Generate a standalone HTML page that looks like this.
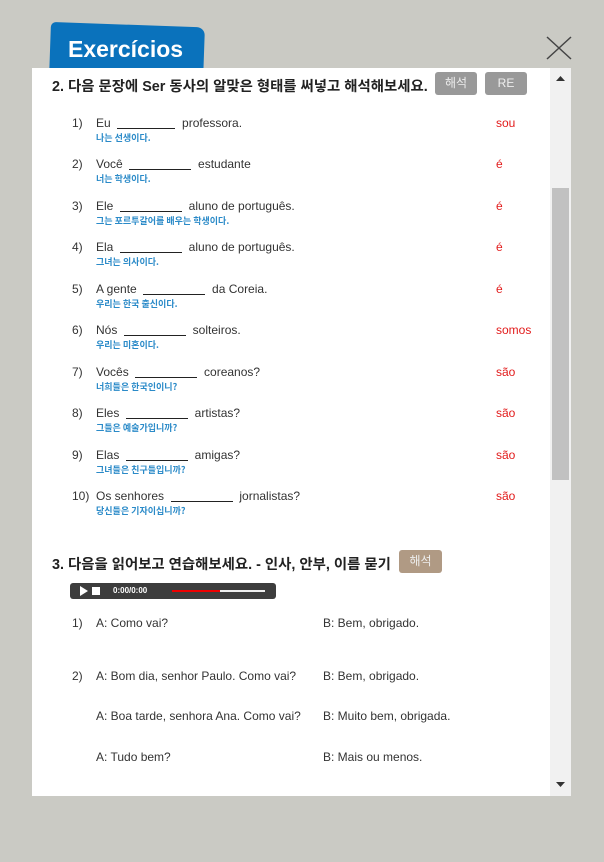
<!DOCTYPE html>
<html><head><meta charset="utf-8"><style>
body{margin:0;width:604px;height:862px;background:#cacac4;position:relative;overflow:hidden;font-family:"Liberation Sans","Noto Sans CJK KR",sans-serif}
.tab{position:absolute;left:51px;top:22px;width:154px;height:56px;background:#0a72bc;border-radius:5px 8px 0 0;transform:rotate(2deg);transform-origin:left top}
.tabt{position:absolute;left:68px;top:36px;color:#fff;font-weight:bold;font-size:23px}
.panel{position:absolute;left:32px;top:68px;width:539px;height:728px;background:#fff}
.sb{position:absolute;left:550px;top:68px;width:21px;height:728px;background:#f1f1f1}
.thumb{position:absolute;left:552px;top:188px;width:17px;height:292px;background:#c1c1c1}
.h{position:absolute;font-size:14.4px;font-weight:bold;color:#222;font-family:"Liberation Sans","Noto Sans CJK KR",sans-serif;white-space:nowrap}
.btn{position:absolute;height:23px;border-radius:3px;color:#eee;font-size:12px;text-align:center;line-height:23px;font-family:"Liberation Sans","Noto Sans CJK KR",sans-serif}
.n{position:absolute;left:72px;font-size:12px;color:#333}
.t{position:absolute;left:96px;font-size:12px;color:#333;white-space:pre}
.k{position:absolute;left:96px;font-size:9px;color:#2a8ac8;font-weight:bold;font-family:"Noto Sans CJK KR",sans-serif}
.a{position:absolute;left:496px;font-size:12px;color:#e21b1b}
.u{display:inline-block;border-bottom:1px solid #222;height:12px;vertical-align:-2px}
.b{position:absolute;left:323px;font-size:12px;color:#333}
</style></head><body>
<div class="tab"></div><div class="tabt">Exercícios</div>
<svg style="position:absolute;left:546px;top:36px" width="26" height="24"><path d="M1 1L25 23M25 1L1 23" stroke="#444" stroke-width="1.5"/></svg>
<div class="panel"></div><div class="sb"></div><div class="thumb"></div>
<svg style="position:absolute;left:555px;top:75px" width="11" height="7"><path d="M1 6L5.5 1L10 6Z" fill="#333"/></svg>
<svg style="position:absolute;left:555px;top:781px" width="11" height="7"><path d="M1 1L5.5 6L10 1Z" fill="#333"/></svg>
<div class="h" style="left:52px;top:75px">2. 다음 문장에 Ser 동사의 알맞은 형태를 써넣고 해석해보세요.</div>
<div class="btn" style="left:435px;top:72px;width:42px;background:#999">해석</div>
<div class="btn" style="left:485px;top:72px;width:42px;background:#999">RE</div>

<div class="n" style="top:116px">1)</div><div class="t" style="top:116px">Eu  <span class="u" style="width:58px"></span>  professora.</div><div class="k" style="top:131px">나는 선생이다.</div><div class="a" style="top:116px">sou</div>
<div class="n" style="top:157px">2)</div><div class="t" style="top:157px">Você  <span class="u" style="width:62px"></span>  estudante</div><div class="k" style="top:172px">너는 학생이다.</div><div class="a" style="top:157px">é</div>
<div class="n" style="top:199px">3)</div><div class="t" style="top:199px">Ele  <span class="u" style="width:62px"></span>  aluno de português.</div><div class="k" style="top:214px">그는 포르투갈어를 배우는 학생이다.</div><div class="a" style="top:199px">é</div>
<div class="n" style="top:240px">4)</div><div class="t" style="top:240px">Ela  <span class="u" style="width:62px"></span>  aluno de português.</div><div class="k" style="top:255px">그녀는 의사이다.</div><div class="a" style="top:240px">é</div>
<div class="n" style="top:282px">5)</div><div class="t" style="top:282px">A gente  <span class="u" style="width:62px"></span>  da Coreia.</div><div class="k" style="top:297px">우리는 한국 출신이다.</div><div class="a" style="top:282px">é</div>
<div class="n" style="top:323px">6)</div><div class="t" style="top:323px">Nós  <span class="u" style="width:62px"></span>  solteiros.</div><div class="k" style="top:338px">우리는 미혼이다.</div><div class="a" style="top:323px">somos</div>
<div class="n" style="top:365px">7)</div><div class="t" style="top:365px">Vocês  <span class="u" style="width:62px"></span>  coreanos?</div><div class="k" style="top:380px">너희들은 한국인이니?</div><div class="a" style="top:365px">são</div>
<div class="n" style="top:406px">8)</div><div class="t" style="top:406px">Eles  <span class="u" style="width:62px"></span>  artistas?</div><div class="k" style="top:421px">그들은 예술가입니까?</div><div class="a" style="top:406px">são</div>
<div class="n" style="top:448px">9)</div><div class="t" style="top:448px">Elas  <span class="u" style="width:62px"></span>  amigas?</div><div class="k" style="top:463px">그녀들은 친구들입니까?</div><div class="a" style="top:448px">são</div>
<div class="n" style="top:489px">10)</div><div class="t" style="top:489px">Os senhores  <span class="u" style="width:62px"></span>  jornalistas?</div><div class="k" style="top:504px">당신들은 기자이십니까?</div><div class="a" style="top:489px">são</div>

<div class="h" style="left:52px;top:553px">3. 다음을 읽어보고 연습해보세요. - 인사, 안부, 이름 묻기</div>
<div class="btn" style="left:399px;top:550px;width:43px;background:#b09a84">해석</div>
<div style="position:absolute;left:70px;top:583px;width:206px;height:16px;background:#3d3d3d;border-radius:3px"></div>
<svg style="position:absolute;left:80px;top:586px" width="22" height="10"><path d="M0 0L8 5L0 10Z" fill="#fff"/><rect x="12" y="1" width="8" height="8" fill="#fff"/></svg>
<div style="position:absolute;left:113px;top:586px;font-size:8px;font-weight:bold;color:#fff">0:00/0:00</div>
<div style="position:absolute;left:172px;top:590px;width:93px;height:2px;background:#eee"></div>
<div style="position:absolute;left:172px;top:590px;width:48px;height:2px;background:#e00"></div>

<div class="n" style="top:616px">1)</div><div class="t" style="top:616px">A: Como vai?</div><div class="b" style="top:616px">B: Bem, obrigado.</div>
<div class="n" style="top:669px">2)</div><div class="t" style="top:669px">A: Bom dia, senhor Paulo. Como vai?</div><div class="b" style="top:669px">B: Bem, obrigado.</div>
<div class="t" style="top:709px">A: Boa tarde, senhora Ana. Como vai?</div><div class="b" style="top:709px">B: Muito bem, obrigada.</div>
<div class="t" style="top:750px">A: Tudo bem?</div><div class="b" style="top:750px">B: Mais ou menos.</div>
</body></html>
